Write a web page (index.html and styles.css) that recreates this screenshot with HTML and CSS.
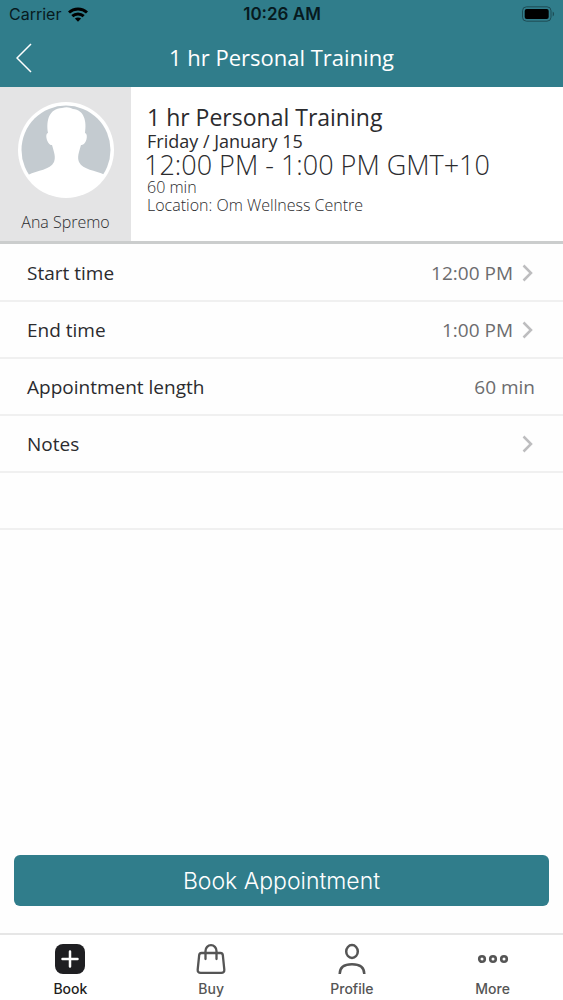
FILE: index.html
```html
<!DOCTYPE html>
<html lang="en">
<head>
<meta charset="utf-8">
<meta name="viewport" content="width=device-width, initial-scale=1">
<title>1 hr Personal Training</title>
<link rel="stylesheet" href="styles.css">
</head>
<body>
<header class="top">
  <div class="status">
    <div class="carrier">
      <span>Carrier</span>
      <svg width="20" height="15" viewBox="0 0 20 15" aria-hidden="true">
        <g fill="none" stroke="currentColor" stroke-width="3">
          <path d="M1 5.500C6 .9 14 .9 19 5.500"/>
          <path d="M4.300 9.100C7.500 6.200 12.500 6.200 15.700 9.100"/>
        </g>
        <path d="M6.900 11.600C8.800 10 11.200 10 13.100 11.600L10 14.800Z" fill="currentColor"/>
      </svg>
    </div>
    <time class="clock">10:26 AM</time>
    <svg class="battery" width="34" height="16" viewBox="0 0 34 16" aria-hidden="true">
      <rect x="1.500" y=".8" width="28.500" height="14.400" rx="4" fill="none" stroke="#1d4c55"/>
      <rect x="3.700" y="3" width="24" height="10" rx="2" fill="#000"/>
      <path d="M31.700 5.500c1.800.8 1.800 4.200 0 5Z" fill="#1d4c55"/>
    </svg>
  </div>
  <div class="nav">
    <button class="back" type="button" aria-label="Back">
      <svg width="16" height="30" viewBox="0 0 16 30"><path d="M15 1L1 15L15 29" fill="none" stroke="currentColor" stroke-width="1.500"/></svg>
    </button>
    <h1 class="title">1 hr Personal Training</h1>
  </div>
</header>

<main class="main">
  <section class="summary">
    <div class="staff">
      <svg class="avatar" width="96" height="96" viewBox="0 0 96 96" aria-hidden="true">
        <circle cx="48" cy="48" r="48" fill="#fff"/>
        <circle cx="48" cy="48" r="44.500" fill="#c4cbd0"/>
        <path d="M10 73C20 68 32 68 36 60C38 55 36 50 34 43C30 44 26 32 30 31C28 18 31 7 44 6Q50 4 55 7C66 8 69 19 67 31C71 32 68 44 63 43C61 50 59 55 61 60C65 68 77 68 87 73C79 87 65 95 48 95S18 87 10 73Z" fill="#fff"/>
      </svg>
      <span class="staff-name">Ana Spremo</span>
    </div>
    <div class="details">
      <h2 class="service">1 hr Personal Training</h2>
      <p class="date">Friday / January 15</p>
      <p class="hours">12:00 PM - 1:00 PM GMT+10</p>
      <p class="meta">60 min</p>
      <p class="meta">Location: Om Wellness Centre</p>
    </div>
  </section>

  <div class="rows">
    <button class="row" type="button">
      <span class="label">Start time</span><span class="value">12:00 PM</span>
      <svg class="chevron" width="11" height="18" viewBox="0 0 11 18"><path d="M1.500 1.500L9 9L1.500 16.500"/></svg>
    </button>
    <button class="row" type="button">
      <span class="label">End time</span><span class="value">1:00 PM</span>
      <svg class="chevron" width="11" height="18" viewBox="0 0 11 18"><path d="M1.500 1.500L9 9L1.500 16.500"/></svg>
    </button>
    <div class="row">
      <span class="label">Appointment length</span><span class="value">60 min</span>
    </div>
    <button class="row" type="button">
      <span class="label">Notes</span>
      <svg class="chevron" width="11" height="18" viewBox="0 0 11 18"><path d="M1.500 1.500L9 9L1.500 16.500"/></svg>
    </button>
    <div class="row"></div>
  </div>

  <button class="submit" type="button">Book Appointment</button>
</main>

<nav class="tabs">
  <a class="tab active" href="#book" aria-current="page">
    <svg width="32" height="32" viewBox="0 0 32 32" aria-hidden="true">
      <rect x="1" y="1" width="30" height="30" rx="8" fill="currentColor"/>
      <path d="M16 8.500v15M8.500 16h15" stroke="#fff" stroke-width="2.500" stroke-linecap="round"/>
    </svg>
    <span>Book</span>
  </a>
  <a class="tab" href="#buy">
    <svg width="32" height="32" viewBox="0 0 32 32" fill="none" stroke="currentColor" stroke-width="2.300" stroke-linecap="round" aria-hidden="true">
      <path d="M6.500 10h19Q27.500 10 27.800 12L29.300 26.500Q29.600 29.800 26.300 29.800H5.700Q2.400 29.800 2.700 26.500L4.200 12Q4.500 10 6.500 10Z"/>
      <path d="M10.500 16V8a5.500 5.800 0 0 1 11 0V16"/>
    </svg>
    <span>Buy</span>
  </a>
  <a class="tab" href="#profile">
    <svg width="32" height="32" viewBox="0 0 32 32" fill="none" stroke="currentColor" stroke-width="2.500" aria-hidden="true">
      <ellipse cx="16" cy="8.500" rx="5.800" ry="6.400"/>
      <path d="M3.700 31C3.700 24 8 21.300 16 21.300S28.300 24 28.300 31"/>
    </svg>
    <span>Profile</span>
  </a>
  <a class="tab" href="#more">
    <svg width="32" height="32" viewBox="0 0 32 32" fill="none" stroke="currentColor" stroke-width="2.600" aria-hidden="true">
      <circle cx="5" cy="16" r="2.800"/><circle cx="16" cy="16" r="2.800"/><circle cx="27" cy="16" r="2.800"/>
    </svg>
    <span>More</span>
  </a>
</nav>
</body>
</html>
```

FILE: styles.css
```css
* {
  box-sizing: border-box;
}

body {
  margin: 0;
  min-height: 100vh;
  display: flex;
  flex-direction: column;
  background: #fefefe;
  color: #2b2b2e;
  font-family: "Open Sans", "Noto Sans", sans-serif;
}

h1,
h2,
p {
  margin: 0;
}

button {
  border: 0;
  padding: 0;
  background: none;
  color: inherit;
  font: inherit;
  cursor: pointer;
}

svg {
  display: block;
  flex: none;
}

.top {
  background: #307d8b;
}

.status {
  display: grid;
  grid-template-columns: 1fr auto 1fr;
  align-items: center;
  height: 28px;
  padding: 0 8px 0 9px;
  color: #071a1e;
  font: 400 16px/28px Inter, sans-serif;
}

.carrier {
  display: flex;
  align-items: center;
  gap: 7px;
}

.carrier svg {
  color: #000;
}

.clock {
  font-size: 17px;
  font-weight: 600;
}

.battery {
  justify-self: end;
}

.nav {
  display: grid;
  grid-template-columns: 48px 1fr 48px;
  align-items: center;
  height: 59px;
  color: #fff;
}

.back {
  display: flex;
  justify-content: center;
}

.title {
  padding-bottom: 2px;
  text-align: center;
  font-size: 22px;
  line-height: 30px;
  font-weight: 400;
}

.main {
  flex: 1;
  display: flex;
  flex-direction: column;
}

.summary {
  display: flex;
  border-bottom: 3px solid #cbcdcd;
  background: #fff;
}

.staff {
  display: flex;
  flex-direction: column;
  align-items: center;
  gap: 12px;
  width: 131px;
  padding: 15px 0 7px;
  background: #e4e4e5;
}

.staff-name {
  font-size: 16px;
  line-height: 24px;
  font-weight: 300;
}

.details {
  padding: 17px 0 0 16px;
}

.service {
  font-size: 23px;
  line-height: 27px;
  font-weight: 400;
}

.date {
  font-size: 18px;
  line-height: 20px;
}

.hours {
  margin-left: -3px;
  font-size: 27px;
  line-height: 27px;
  font-weight: 300;
}

.meta {
  font-size: 16px;
  line-height: 18px;
  font-weight: 300;
}

.rows {
  padding-top: 1px;
}

.row {
  display: flex;
  align-items: center;
  gap: 9px;
  width: 100%;
  height: 57px;
  padding: 0 28px 0 27px;
  border-bottom: 2px solid #f0f0f0;
  font-size: 19px;
  line-height: 28px;
  text-align: left;
}

.label {
  flex: 1;
}

.value {
  color: #6c6c6e;
}

.chevron {
  margin-right: 2px;
  fill: none;
  stroke: #bdbdbf;
  stroke-width: 2.5;
}

.submit {
  margin: auto 14px 27px;
  height: 51px;
  border-radius: 6px;
  background: #307d8b;
  color: #fff;
  font: 300 23px/30px Inter, sans-serif;
}

.tabs {
  display: grid;
  grid-template-columns: repeat(4, 1fr);
  border-top: 2px solid #e6e6e6;
  background: #fff;
}

.tab {
  display: flex;
  flex-direction: column;
  align-items: center;
  gap: 5px;
  padding: 8px 0 2px;
  color: #555;
  font: 500 14px/18px Inter, sans-serif;
  text-decoration: none;
}

.active {
  color: #1f1f22;
}
```
